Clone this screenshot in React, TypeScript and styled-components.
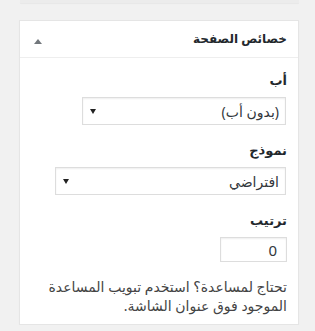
import React from "react";
import styled, { createGlobalStyle } from "styled-components";

const Global = createGlobalStyle`
  html, body { margin: 0; padding: 0; background: #f1f1f1; }
  body { font-family: "Noto Sans", "DejaVu Sans", sans-serif; color: #444; }
`;

const Page = styled.div`
  direction: rtl;
  padding: 0 16px 0 20px;
  width: 315px;
  box-sizing: border-box;
`;

const PrevBox = styled.div`
  height: 3px;
  background: #ececec;
  box-shadow: 0 1px 1px rgba(0, 0, 0, 0.04);
  margin-bottom: 17px;
`;

const Panel = styled.div`
  background: #fff;
  border: 1px solid #e5e5e5;
  box-shadow: 0 1px 1px rgba(0, 0, 0, 0.04);
  width: 280px;
  box-sizing: border-box;
`;

const Header = styled.div`
  height: 37px;
  display: flex;
  align-items: center;
  justify-content: space-between;
  padding: 0 11px 0 14px;
  border-bottom: 1px solid #eee;
  box-sizing: border-box;
`;

const Title = styled.h2`
  margin: 0;
  font-size: 12px;
  font-weight: 600;
  color: #23282d;
  line-height: 20px;
`;

const Toggle = styled.span`
  width: 0;
  height: 0;
  border-left: 4px solid transparent;
  border-right: 4px solid transparent;
  border-bottom: 5px solid #72777c;
  margin-top: 4px;
`;

const Body = styled.div`
  padding: 12px 11px 9px 12px;
  display: flex;
  flex-direction: column;
  align-items: flex-start;
`;

const Label = styled.div`
  font-size: 13px;
  font-weight: 600;
  color: #23282d;
  line-height: 20px;
  margin-bottom: 7px;
`;

const SelectBox = styled.div<{ $w: number }>`
  width: ${(p) => p.$w}px;
  height: 28px;
  box-sizing: border-box;
  border: 1px solid #ddd;
  box-shadow: inset 0 1px 2px rgba(0, 0, 0, 0.07);
  display: flex;
  align-items: center;
  justify-content: space-between;
  padding: 0 6px 0 7px;
  margin: 0 1px 15px 0;
  font-size: 14px;
  color: #32373c;
`;

const Arrow = styled.span`
  width: 0;
  height: 0;
  border-left: 3px solid transparent;
  border-right: 3px solid transparent;
  border-top: 5px solid #222;
`;

const NumInput = styled.div`
  width: 67px;
  height: 25px;
  box-sizing: border-box;
  border: 1px solid #ddd;
  box-shadow: inset 0 1px 2px rgba(0, 0, 0, 0.07);
  display: flex;
  align-items: center;
  padding: 0 9px;
  font-size: 15px;
  color: #32373c;
  margin-bottom: 15px;
`;

const Help = styled.p`
  margin: 0;
  font-size: 14px;
  line-height: 19px;
  color: #444;
`;

export default function App() {
  return (
    <>
      <Global />
      <Page>
        <PrevBox />
        <Panel>
          <Header>
            <Title>خصائص الصفحة</Title>
            <Toggle />
          </Header>
          <Body>
            <Label>أب</Label>
            <SelectBox $w={204}>
              <span>(بدون أب)</span>
              <Arrow />
            </SelectBox>
            <Label>نموذج</Label>
            <SelectBox $w={231}>
              <span>افتراضي</span>
              <Arrow />
            </SelectBox>
            <Label>ترتيب</Label>
            <NumInput>0</NumInput>
            <Help>تحتاج لمساعدة؟ استخدم تبويب المساعدة الموجود فوق عنوان الشاشة.</Help>
          </Body>
        </Panel>
      </Page>
    </>
  );
}
